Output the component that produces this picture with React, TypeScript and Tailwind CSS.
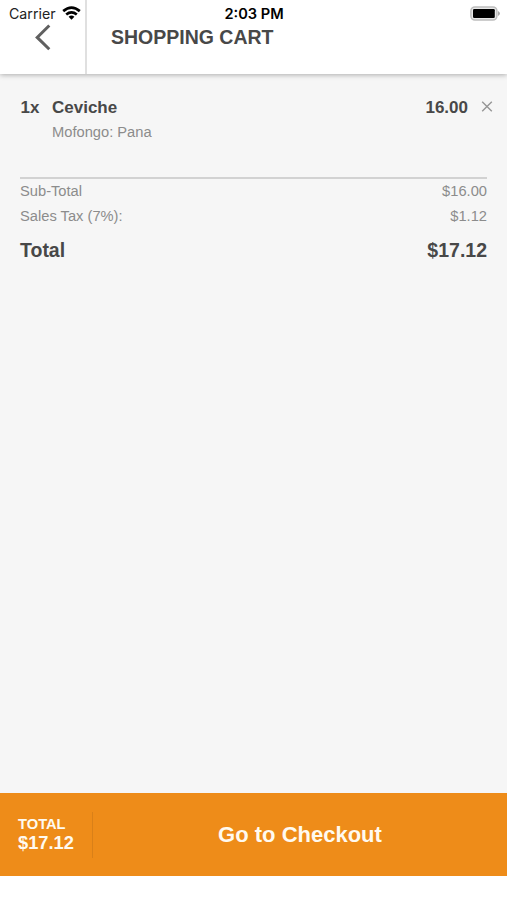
function StatusBar() {
  return (
    <div className="absolute inset-x-0 top-0 z-20 flex h-7 items-center justify-between pr-[7px] pl-[9px] font-[Inter,sans-serif] text-black">
      <div className="flex items-center gap-[6px]">
        <span className="text-[14.2px] leading-7 text-[#222]">Carrier</span>
        <svg className="-mt-[3px]" width="19" height="14" viewBox="0 0 19 14" fill="none" stroke="#000" strokeWidth="2.7">
          <path d="M1.2 5.1Q9.5-1.8 17.8 5.1" />
          <path d="M4.2 8.5Q9.5 4.2 14.8 8.5" />
          <path d="M6.6 10.8Q9.5 8.4 12.4 10.8L9.5 13.7Z" fill="#000" stroke="none" />
        </svg>
      </div>
      <svg className="-mt-[2px]" width="30" height="15" viewBox="0 0 30 15">
        <rect x="0.9" y="0.9" width="26" height="13.2" rx="4" fill="#e8e8e8" stroke="#bdbdbd" strokeWidth="1.5" />
        <rect x="3" y="3" width="21.8" height="9" rx="1.2" fill="#000" />
        <path d="M28 5Q32 7.5 28 10Z" fill="#aaa" />
      </svg>
      <span className="absolute inset-x-0 pl-px text-center text-[14.6px] leading-7 font-semibold">2:03 PM</span>
    </div>
  );
}

function SummaryRow({ label, value }: { label: string; value: string }) {
  return (
    <div className="flex h-[24.5px] items-center justify-between text-[14.7px] text-[#8c8c8c]">
      <span>{label}</span>
      <span>{value}</span>
    </div>
  );
}

export default function App() {
  return (
    <div className="relative flex h-[900px] w-full flex-col overflow-hidden bg-white font-['Liberation_Sans',Arial,sans-serif] text-[#484848]">
      <StatusBar />
      <header className="z-10 flex h-[74px] shrink-0 bg-white shadow-[0_1px_5px_rgba(0,0,0,0.3)]">
        <button aria-label="Back" className="flex w-[87px] items-start justify-center border-r-2 border-[#e0e0e0] pt-6 pr-[2px]">
          <svg width="18" height="27" viewBox="0 0 18 27" fill="none" stroke="#606060" strokeWidth="3">
            <path d="M16.3 1.5L4.2 13.4L16.3 25.3" />
          </svg>
        </button>
        <h1 className="pl-6 text-[19.5px] leading-[74px] font-bold">SHOPPING CART</h1>
      </header>
      <main className="flex-1 bg-[#f6f6f6] px-5 pt-[22px]">
        <section className="flex h-[83px] items-start border-b-2 border-[#d2d2d2] text-[17px]">
          <span className="w-8 pl-[0.5px] leading-6 font-bold">1x</span>
          <div className="flex-1">
            <h2 className="leading-6 font-bold">Ceviche</h2>
            <p className="text-[14.7px] leading-6 text-[#8c8c8c]">Mofongo: Pana</p>
          </div>
          <span className="leading-6 font-bold">16.00</span>
          <button aria-label="Remove Ceviche" className="-mr-[6px] mt-[5px] ml-[13px]">
            <svg width="12" height="11" viewBox="0 0 12 11" fill="none" stroke="#969696" strokeWidth="1.4">
              <path d="M1.2 .7L10.8 10.3M10.8 .7L1.2 10.3" />
            </svg>
          </button>
        </section>
        <SummaryRow label="Sub-Total" value="$16.00" />
        <SummaryRow label="Sales Tax (7%):" value="$1.12" />
        <div className="mt-[9px] flex h-7 items-center justify-between text-[19.5px] font-bold">
          <span>Total</span>
          <span>$17.12</span>
        </div>
      </main>
      <footer className="mb-6 flex h-[83px] shrink-0 items-center bg-[#ee8c19] font-bold text-[#fffaf0]">
        <div className="flex h-[46px] w-[93px] flex-col justify-center border-r border-[#d98018] pb-[2px] pl-[18px]">
          <span className="text-[14.7px] leading-[18px]">TOTAL</span>
          <span className="text-[18.3px] leading-[19px]">$17.12</span>
        </div>
        <button className="flex-1 text-center text-[22px] leading-[83px]">Go to Checkout</button>
      </footer>
    </div>
  );
}
